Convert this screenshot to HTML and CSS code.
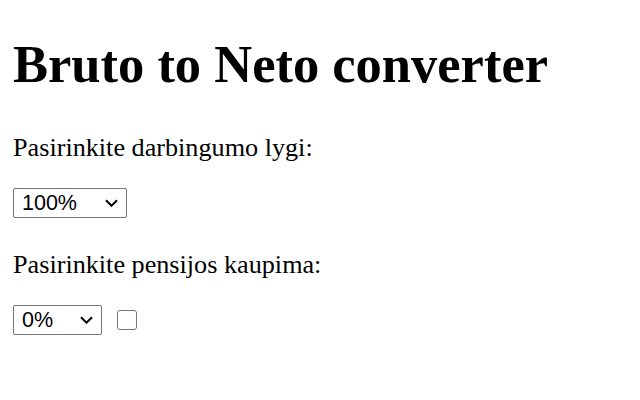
FILE: index.html
```html
<!DOCTYPE html>
<html lang="lt">
<head>
<meta charset="utf-8">
<title>Bruto to Neto converter</title>
<link rel="stylesheet" href="styles.css">
</head>
<body class="page">
<h1 class="title">Bruto to Neto converter</h1>
<p class="label">Pasirinkite darbingumo lygi:</p>
<p class="row">
<select class="select select-wide">
<option>100%</option>
<option>75%</option>
<option>50%</option>
</select>
</p>
<p class="label">Pasirinkite pensijos kaupima:</p>
<p class="row">
<select class="select select-narrow">
<option>0%</option>
<option>3%</option>
</select>
<input type="checkbox" class="check">
</p>
</body>
</html>
```
FILE: styles.css
```css
html, body {
  background: #fff;
}
.page {
  margin: 0 13px 13px;
  padding-top: 1px;
  font-family: "Liberation Serif", "Times New Roman", serif;
  color: #000;
}
.title {
  font-size: 52.5px;
  font-weight: bold;
  margin: 33px 0 39px;
}
.label {
  font-size: 26.2px;
  margin: 0 0 23px;
}
.row {
  font-size: 26.2px;
  margin: 0 0 32px;
}
.select {
  -webkit-appearance: none;
  appearance: none;
  box-sizing: border-box;
  font-family: "Liberation Sans", Arial, sans-serif;
  font-size: 21.5px;
  height: 30px;
  border: 1px solid #767676;
  border-radius: 2px;
  background-color: #fff;
  background-image: url("data:image/svg+xml;utf8,<svg xmlns='http://www.w3.org/2000/svg' width='13' height='8' viewBox='0 0 13 8'><path d='M1 1.2l5.5 5.5 5.5-5.5' fill='none' stroke='%23000' stroke-width='2'/></svg>");
  background-repeat: no-repeat;
  background-position: right 8px center;
  color: #000;
  padding: 0 0 0 8px;
  margin: 0;
  vertical-align: middle;
}
.select-wide {
  width: 114px;
}
.select-narrow {
  width: 89px;
}
.check {
  -webkit-appearance: none;
  appearance: none;
  box-sizing: border-box;
  width: 20px;
  height: 20px;
  border: 1px solid #767676;
  border-radius: 3px;
  background: #fff;
  margin: 0 0 0 8px;
  vertical-align: middle;
}
```
